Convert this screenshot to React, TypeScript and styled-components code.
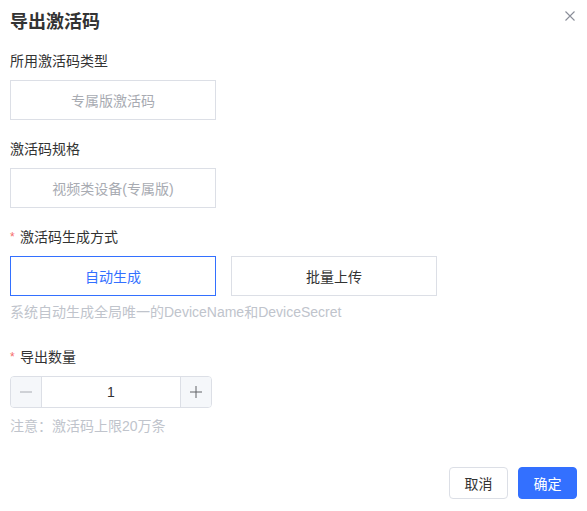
import React, { useState } from 'react'
import styled, { createGlobalStyle } from 'styled-components'

const GlobalStyle = createGlobalStyle`
  html, body {
    margin: 0;
    padding: 0;
    background: #fff;
  }
  body {
    font-family: "Liberation Sans", "Noto Sans CJK SC", sans-serif;
    color: #333;
  }
`

const App = () => {
  const [mode, setMode] = useState<'auto' | 'upload'>('auto')
  const [count, setCount] = useState(1)

  return (
    <>
      <GlobalStyle />
      <Dialog>
        <Header>
          <Title>导出激活码</Title>
          <CloseButton aria-label="关闭">
            <svg width="10" height="10" viewBox="0 0 10 10">
              <path d="M0.5 0.5L9.5 9.5M9.5 0.5L0.5 9.5" stroke="#8a8e99" strokeWidth="1.1" />
            </svg>
          </CloseButton>
        </Header>

        <FormItem>
          <Label>所用激活码类型</Label>
          <ReadonlyBox>专属版激活码</ReadonlyBox>
        </FormItem>

        <FormItem>
          <Label>激活码规格</Label>
          <ReadonlyBox>视频类设备(专属版)</ReadonlyBox>
        </FormItem>

        <FormItem $gap={9} $bottom={25}>
          <Label>
            <Required>*</Required>激活码生成方式
          </Label>
          <ChoiceRow>
            <Choice $active={mode === 'auto'} onClick={() => setMode('auto')}>
              自动生成
            </Choice>
            <Choice $active={mode === 'upload'} onClick={() => setMode('upload')}>
              批量上传
            </Choice>
          </ChoiceRow>
          <Help $offset={-3}>系统自动生成全局唯一的DeviceName和DeviceSecret</Help>
        </FormItem>

        <FormItem>
          <Label>
            <Required>*</Required>导出数量
          </Label>
          <NumberInput>
            <Step
              $disabled={count <= 1}
              onClick={() => setCount(c => Math.max(1, c - 1))}
            >
              <svg width="12" height="12" viewBox="0 0 12 12">
                <path d="M0 6H12" stroke="currentColor" strokeWidth="1" />
              </svg>
            </Step>
            <Value>{count}</Value>
            <Step $right onClick={() => setCount(c => c + 1)}>
              <svg width="12" height="12" viewBox="0 0 12 12">
                <path d="M0 6H12M6 0V12" stroke="currentColor" strokeWidth="1" />
              </svg>
            </Step>
          </NumberInput>
          <Help $offset={-1}>注意：激活码上限20万条</Help>
        </FormItem>

        <Footer>
          <Button>取消</Button>
          <Button $primary>确定</Button>
        </Footer>
      </Dialog>
    </>
  )
}

const Dialog = styled.div`
  width: 587px;
  height: 511px;
  box-sizing: border-box;
  padding: 10px 10px 0 10px;
  display: flex;
  flex-direction: column;
`

const Header = styled.div`
  display: flex;
  align-items: flex-start;
  justify-content: space-between;
  height: 24px;
  margin-bottom: 17px;
`

const Title = styled.h2`
  margin: 0;
  font-size: 18px;
  line-height: 24px;
  font-weight: bold;
  color: #333;
`

const CloseButton = styled.button`
  border: none;
  background: none;
  padding: 0;
  margin: 1px 2px 0 0;
  width: 10px;
  height: 10px;
  display: flex;
  cursor: pointer;
`

const FormItem = styled.div<{ $gap?: number; $bottom?: number }>`
  display: flex;
  flex-direction: column;
  align-items: flex-start;
  gap: ${({ $gap }) => $gap ?? 9}px;
  margin-bottom: ${({ $bottom }) => $bottom ?? 19}px;
`

const Label = styled.div`
  font-size: 14px;
  line-height: 20px;
  color: #333;
  display: flex;
  align-items: center;
`

const Required = styled.span`
  color: #f56c6c;
  font-size: 12px;
  margin-right: 5px;
  width: 5px;
`

const ReadonlyBox = styled.div`
  width: 206px;
  height: 40px;
  box-sizing: border-box;
  border: 1px solid #dcdfe6;
  display: flex;
  align-items: center;
  justify-content: center;
  font-size: 14px;
  color: #a8abb2;
`

const ChoiceRow = styled.div`
  display: flex;
  gap: 15px;
`

const Choice = styled.button<{ $active?: boolean }>`
  width: 206px;
  height: 40px;
  box-sizing: border-box;
  border: 1px solid ${({ $active }) => ($active ? '#3370ff' : '#dcdfe6')};
  background: #fff;
  color: ${({ $active }) => ($active ? '#3370ff' : '#333')};
  font-family: inherit;
  font-size: 14px;
  padding: 0;
  cursor: pointer;
`

const Help = styled.div<{ $offset: number }>`
  font-size: 14px;
  line-height: 20px;
  color: #c0c4cc;
  margin-top: ${({ $offset }) => $offset}px;
`

const NumberInput = styled.div`
  width: 202px;
  height: 32px;
  box-sizing: border-box;
  border: 1px solid #dcdfe6;
  border-radius: 4px;
  display: flex;
  overflow: hidden;
`

const Step = styled.button<{ $disabled?: boolean; $right?: boolean }>`
  width: 31px;
  flex: none;
  border: none;
  ${({ $right }) => ($right ? 'border-left' : 'border-right')}: 1px solid #dcdfe6;
  background: #f5f7fa;
  color: ${({ $disabled }) => ($disabled ? '#a8abb2' : '#606266')};
  display: flex;
  align-items: center;
  justify-content: center;
  padding: 0;
  cursor: ${({ $disabled }) => ($disabled ? 'not-allowed' : 'pointer')};
`

const Value = styled.div`
  flex: 1;
  display: flex;
  align-items: center;
  justify-content: center;
  font-size: 14px;
  color: #333;
`

const Footer = styled.div`
  margin-top: auto;
  margin-bottom: 12px;
  display: flex;
  justify-content: flex-end;
  gap: 10px;
`

const Button = styled.button<{ $primary?: boolean }>`
  width: 59px;
  height: 32px;
  box-sizing: border-box;
  border-radius: 4px;
  border: 1px solid ${({ $primary }) => ($primary ? '#3370ff' : '#dcdfe6')};
  background: ${({ $primary }) => ($primary ? '#3370ff' : '#fff')};
  color: ${({ $primary }) => ($primary ? '#fff' : '#333')};
  font-family: inherit;
  font-size: 14px;
  padding: 0;
  cursor: pointer;
`

export default App
